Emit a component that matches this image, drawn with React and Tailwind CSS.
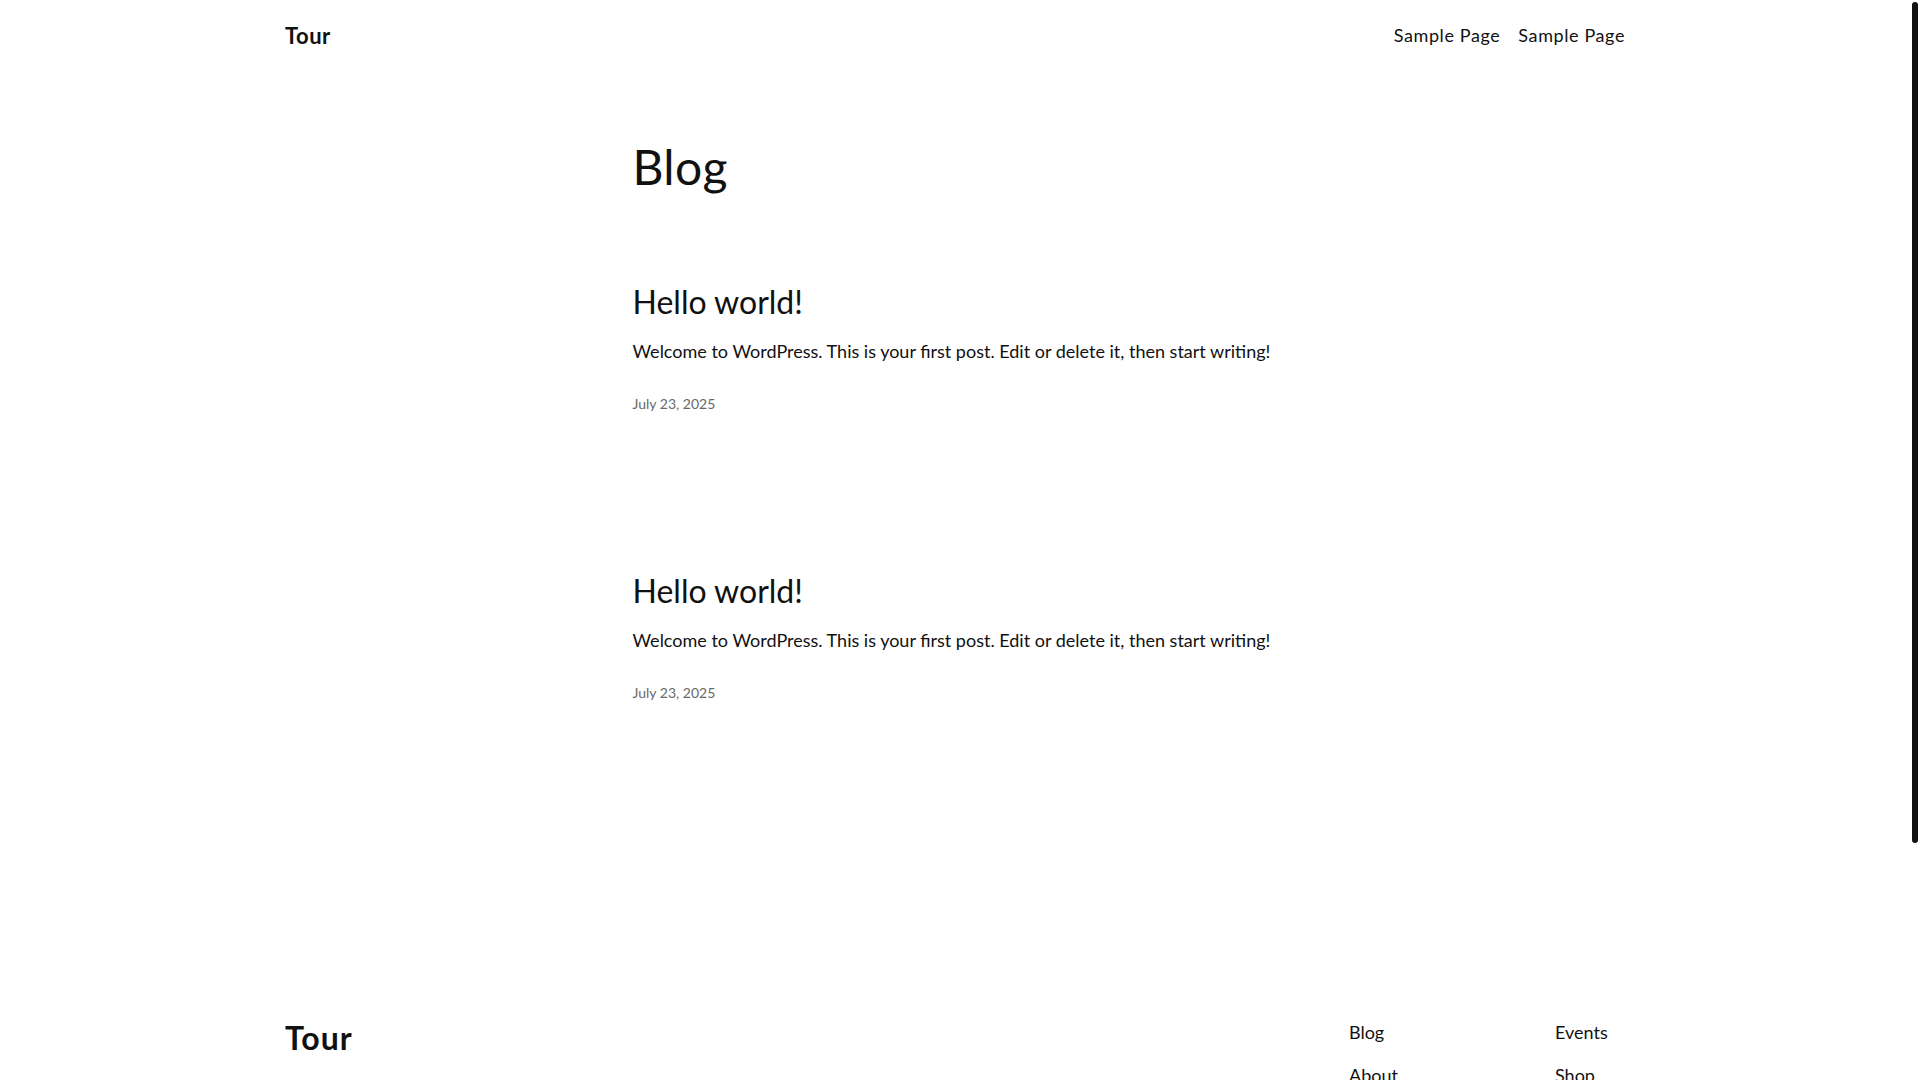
const posts = [
  { id: 1, title: 'Hello world!', excerpt: 'Welcome to WordPress. This is your first post. Edit or delete it, then start writing!', date: 'July 23, 2025' },
  { id: 2, title: 'Hello world!', excerpt: 'Welcome to WordPress. This is your first post. Edit or delete it, then start writing!', date: 'July 23, 2025' },
];

const footerCols = [
  ['Blog', 'About', 'FAQs', 'Authors'],
  ['Events', 'Shop', 'Patterns', 'Themes'],
];

export default function App() {
  return (
    <div className="relative bg-white text-[#111111] [font-family:Lato,'Noto_Sans',sans-serif]">
      {/* page column, the last 10px are the scrollbar gutter */}
      <div className="mr-[10px]">
        <header className="mx-auto flex h-[70px] max-w-[1340px] items-center justify-between">
          <a href="#" className="text-[22px] font-bold leading-[1.5] tracking-[0.5px]">Tour</a>
          <nav className="flex items-center gap-[18px] text-[18px] font-normal leading-[1.5] tracking-[0.6px]">
            <a href="#">Sample Page</a>
            <a href="#">Sample Page</a>
          </nav>
        </header>

        <main className="mx-auto w-[645px] pt-[68px] pb-[316px]">
          <h1 className="text-[48px] font-normal leading-[1.2] tracking-[0.3px]">Blog</h1>
          <ul className="mt-[87px] flex flex-col gap-[158px]">
            {posts.map(p => (
              <li key={p.id}>
                <h2 className="text-[32px] font-normal leading-[1.2]">
                  <a href="#">{p.title}</a>
                </h2>
                <p className="mt-[17px] whitespace-nowrap text-[18px] font-normal leading-[1.5]">{p.excerpt}</p>
                <p className="mt-[28px] text-[14px] font-normal leading-[1.5] text-[#686868]">{p.date}</p>
              </li>
            ))}
          </ul>
        </main>

        <footer className="mx-auto max-w-[1340px] pb-[87px]">
          <div className="flex items-start justify-between">
            <a href="#" className="text-[32px] font-bold leading-[1.2] tracking-[1px]">Tour</a>
            <div className="flex">
              {footerCols.map((col, i) => (
                <ul key={i} className={`flex flex-col gap-[16px] text-[18px] font-normal leading-[1.5] ${i === 0 ? 'w-[206px]' : 'w-[70px]'}`}>
                  {col.map(item => (
                    <li key={item}><a href="#">{item}</a></li>
                  ))}
                </ul>
              ))}
            </div>
          </div>
          <div className="mt-[100px] flex justify-between text-[14px] font-normal leading-[1.5]">
            <p>Twenty Twenty-Five</p>
            <p>Designed with <a href="#" className="underline">WordPress</a></p>
          </div>
        </footer>
      </div>

      {/* scrollbar thumb */}
      <div className="fixed right-[2px] top-[2px] h-[841px] w-[6px] rounded-full bg-[#111111]" />
    </div>
  );
}
